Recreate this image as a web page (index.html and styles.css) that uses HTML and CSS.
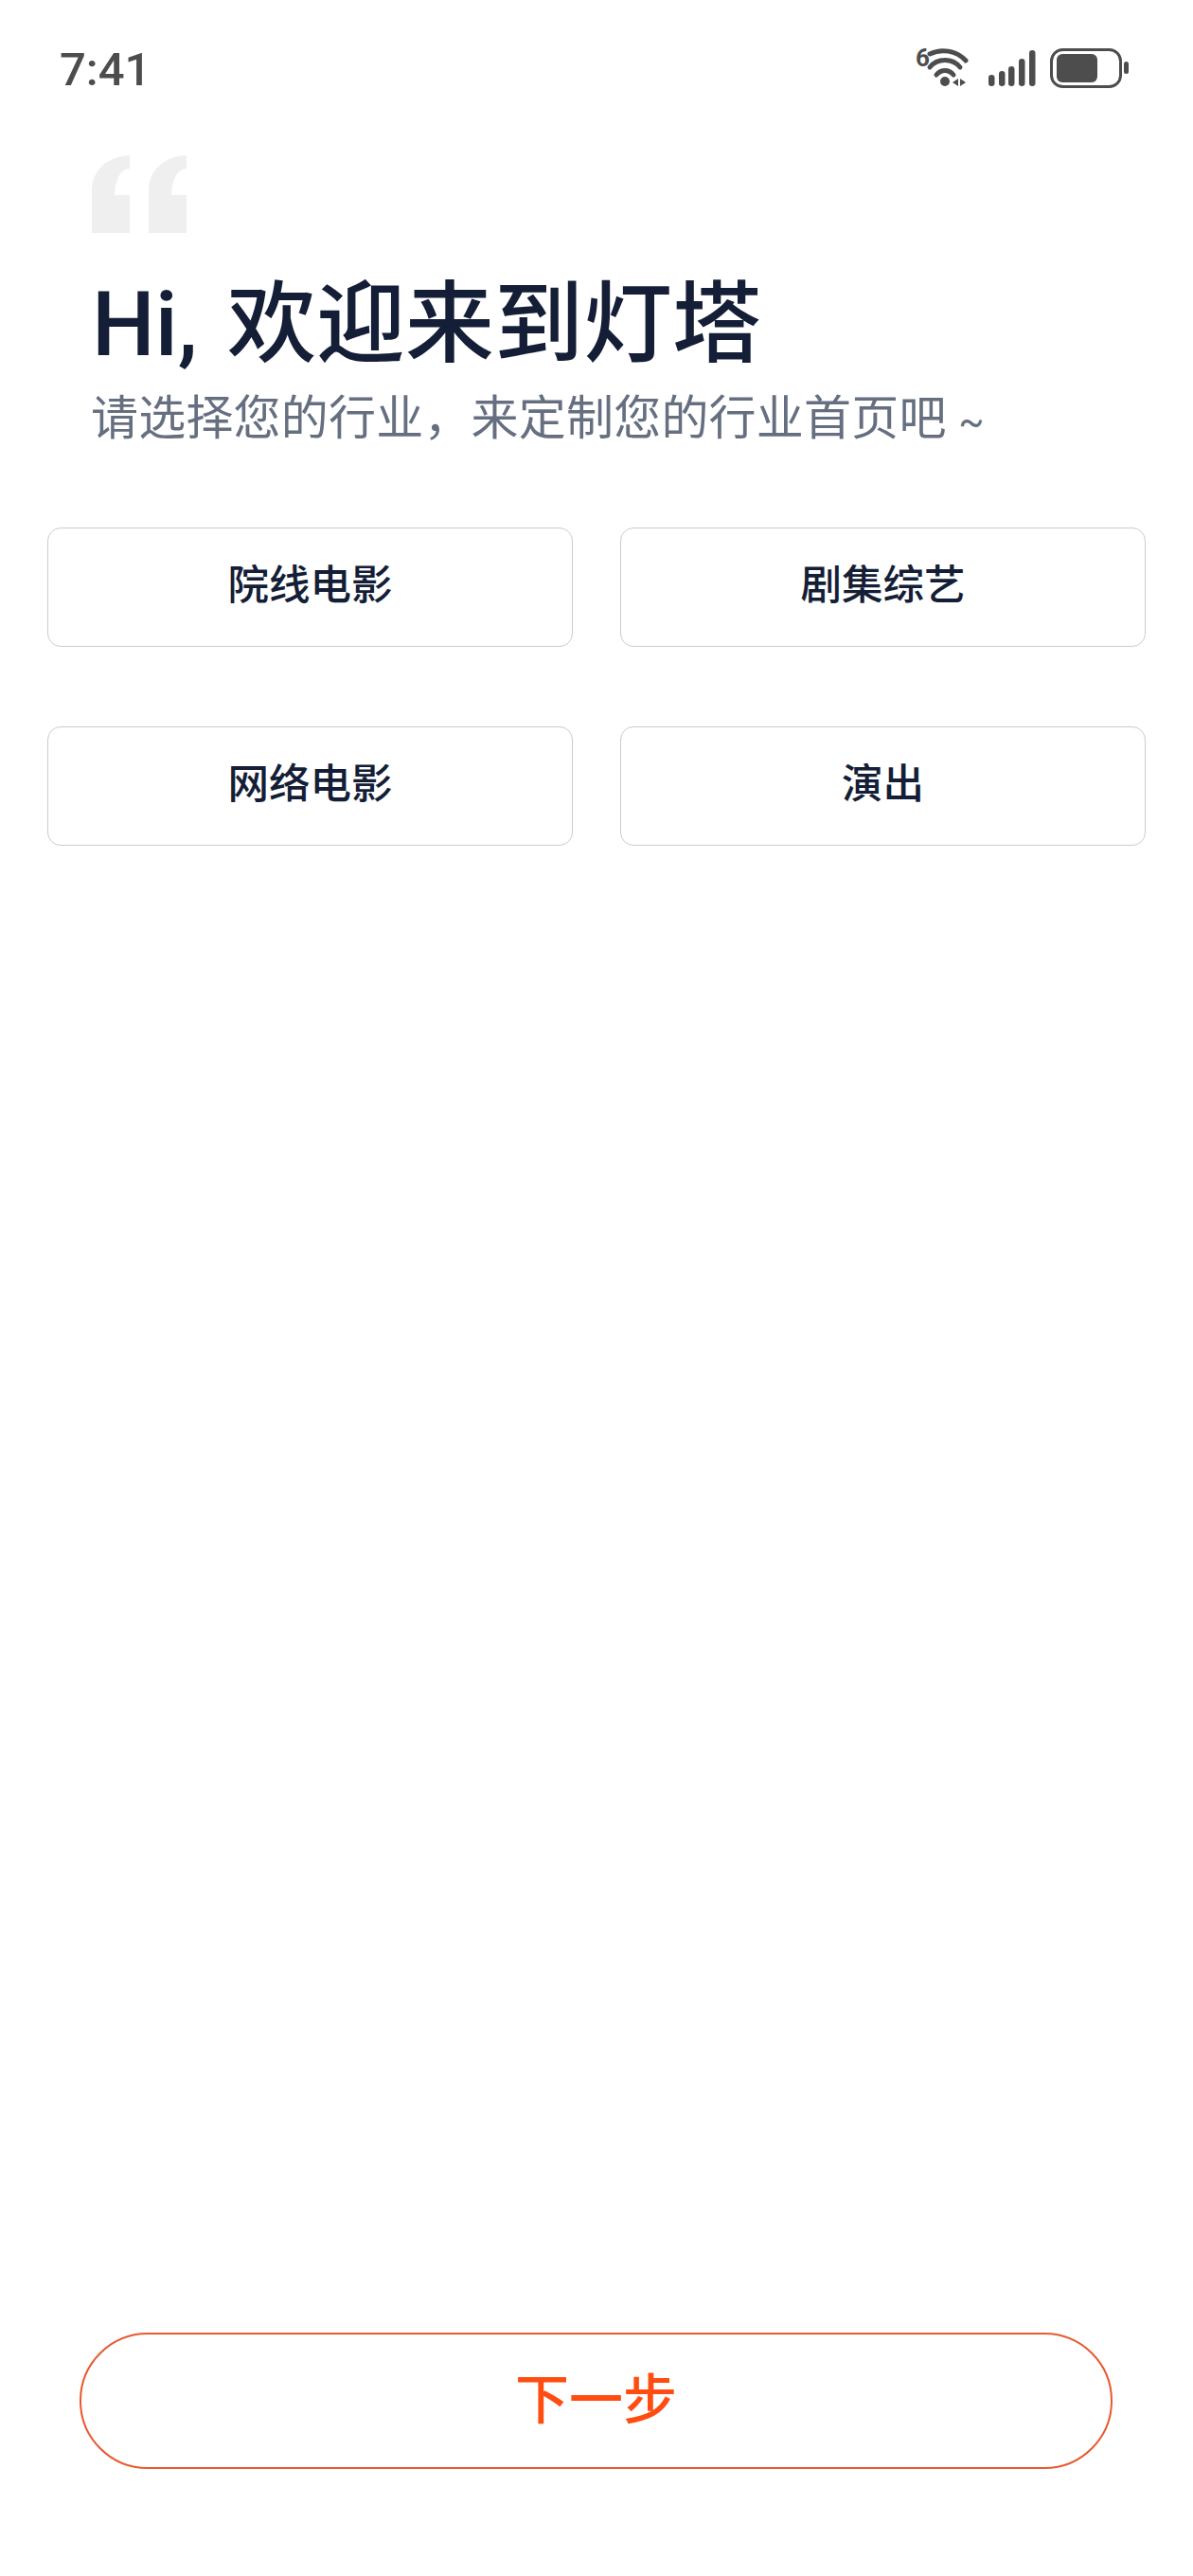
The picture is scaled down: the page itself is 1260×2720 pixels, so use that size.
FILE: index.html
```html
<!doctype html>
<html lang="zh-CN">
<head>
	<meta charset="utf-8">
	<title>灯塔</title>
	<link rel="stylesheet" href="styles.css">
</head>
<body>
	<div class="page">
		<div class="status">
			<span class="time">7:41</span>
			<svg class="status-icons" width="232" height="56" viewBox="0 -8 232 56">
				<!-- y 0 in the viewBox is y 49 on the screen -->
				<text class="wifi-six" x="3" y="21">6</text>
				<g fill="none" stroke="#4d4d4d" stroke-width="5" stroke-linecap="round">
					<path d="M18 8C30 2 46 4 56 15"/>
					<path d="M18 22C26 12 42 12 50 22"/>
					<path d="M25 30C30 24 38 24 43 30"/>
				</g>
				<circle cx="34" cy="37" r="5" fill="#4d4d4d"/>
				<path d="M48 34V42L42 38Z M50 34V42L56 38Z" fill="#4d4d4d"/>
				<g fill="#4d4d4d">
					<rect x="80" y="30" width="6.5" height="12" rx="3.2"/>
					<rect x="91" y="26" width="6.5" height="16" rx="3.2"/>
					<rect x="101" y="21" width="6.5" height="21" rx="3.2"/>
					<rect x="112" y="13" width="6.5" height="29" rx="3.2"/>
					<rect x="123" y="4" width="6.5" height="38" rx="3.2"/>
				</g>
				<rect x="146.5" y="3.5" width="73" height="39" rx="12" fill="none" stroke="#4d4d4d" stroke-width="3"/>
				<rect x="152" y="8" width="43" height="30" rx="6" fill="#4d4d4d"/>
				<rect x="223" y="16" width="5" height="13" rx="2.5" fill="#4d4d4d"/>
			</svg>
		</div>

		<div class="intro">
			<svg class="quote" width="100" height="82" viewBox="0 0 100 82">
				<path d="M40 0V14C30 15 25 24 24 42H40V82H0V38C0 14 18 1 40 0Z"/>
				<path d="M100 0V14C90 15 85 24 84 42H100V82H60V38C60 14 78 1 100 0Z"/>
			</svg>
			<h1 class="title">Hi, 欢迎来到灯塔</h1>
			<p class="subtitle">请选择您的行业，来定制您的行业首页吧 <span class="tilde">~</span></p>
		</div>

		<div class="options">
			<div class="option">院线电影</div>
			<div class="option">剧集综艺</div>
			<div class="option">网络电影</div>
			<div class="option">演出</div>
		</div>

		<div class="footer">
			<div class="next">下一步</div>
		</div>
	</div>
</body>
</html>
```

FILE: styles.css
```css
* {
	box-sizing: border-box;
}
body {
	margin: 0;
	background: #fff;
	font-family: "Roboto", "Noto Sans CJK SC", sans-serif;
}
.page {
	display: flex;
	flex-direction: column;
	height: 2720px;
}
.status {
	display: flex;
	justify-content: space-between;
	align-items: flex-start;
	height: 164px;
	padding: 41px 64px 0 63px;
}
.time {
	padding-top: 10px;
	font-size: 49px;
	font-weight: 500;
	line-height: 46px;
	color: #4d4d4d;
}
.status-icons {
	display: block;
}
.wifi-six {
	font-family: "Roboto", sans-serif;
	font-size: 26px;
	font-weight: 700;
	fill: #4d4d4d;
}
.intro {
	padding-left: 97px;
}
.quote {
	display: block;
	fill: #efefef;
}
.title {
	margin: 35px 0 0;
	font-size: 94px;
	font-weight: 500;
	line-height: 124px;
	word-spacing: 8px;
	color: #141e36;
}
.subtitle {
	margin: 2px 0 0 -1px;
	font-size: 50px;
	line-height: 70px;
	letter-spacing: 0.2px;
	color: #666f80;
}
.tilde {
	font-size: 40px;
	line-height: 1;
}
.options {
	display: grid;
	grid-template-columns: 555px 555px;
	gap: 84px 50px;
	padding: 80px 0 0 50px;
}
.option {
	display: flex;
	align-items: center;
	justify-content: center;
	height: 126px;
	padding-bottom: 12px;
	border: 1.5px solid #c8ccd2;
	border-radius: 14px;
	font-size: 43.5px;
	font-weight: 500;
	color: #141e36;
}
.footer {
	margin-top: auto;
	padding: 0 85px 113px 84px;
}
.next {
	display: flex;
	align-items: center;
	justify-content: center;
	height: 144px;
	padding-bottom: 13px;
	border: 2px solid #e8592f;
	border-radius: 72px;
	font-size: 57px;
	font-weight: 500;
	color: #ff4d12;
}
```
